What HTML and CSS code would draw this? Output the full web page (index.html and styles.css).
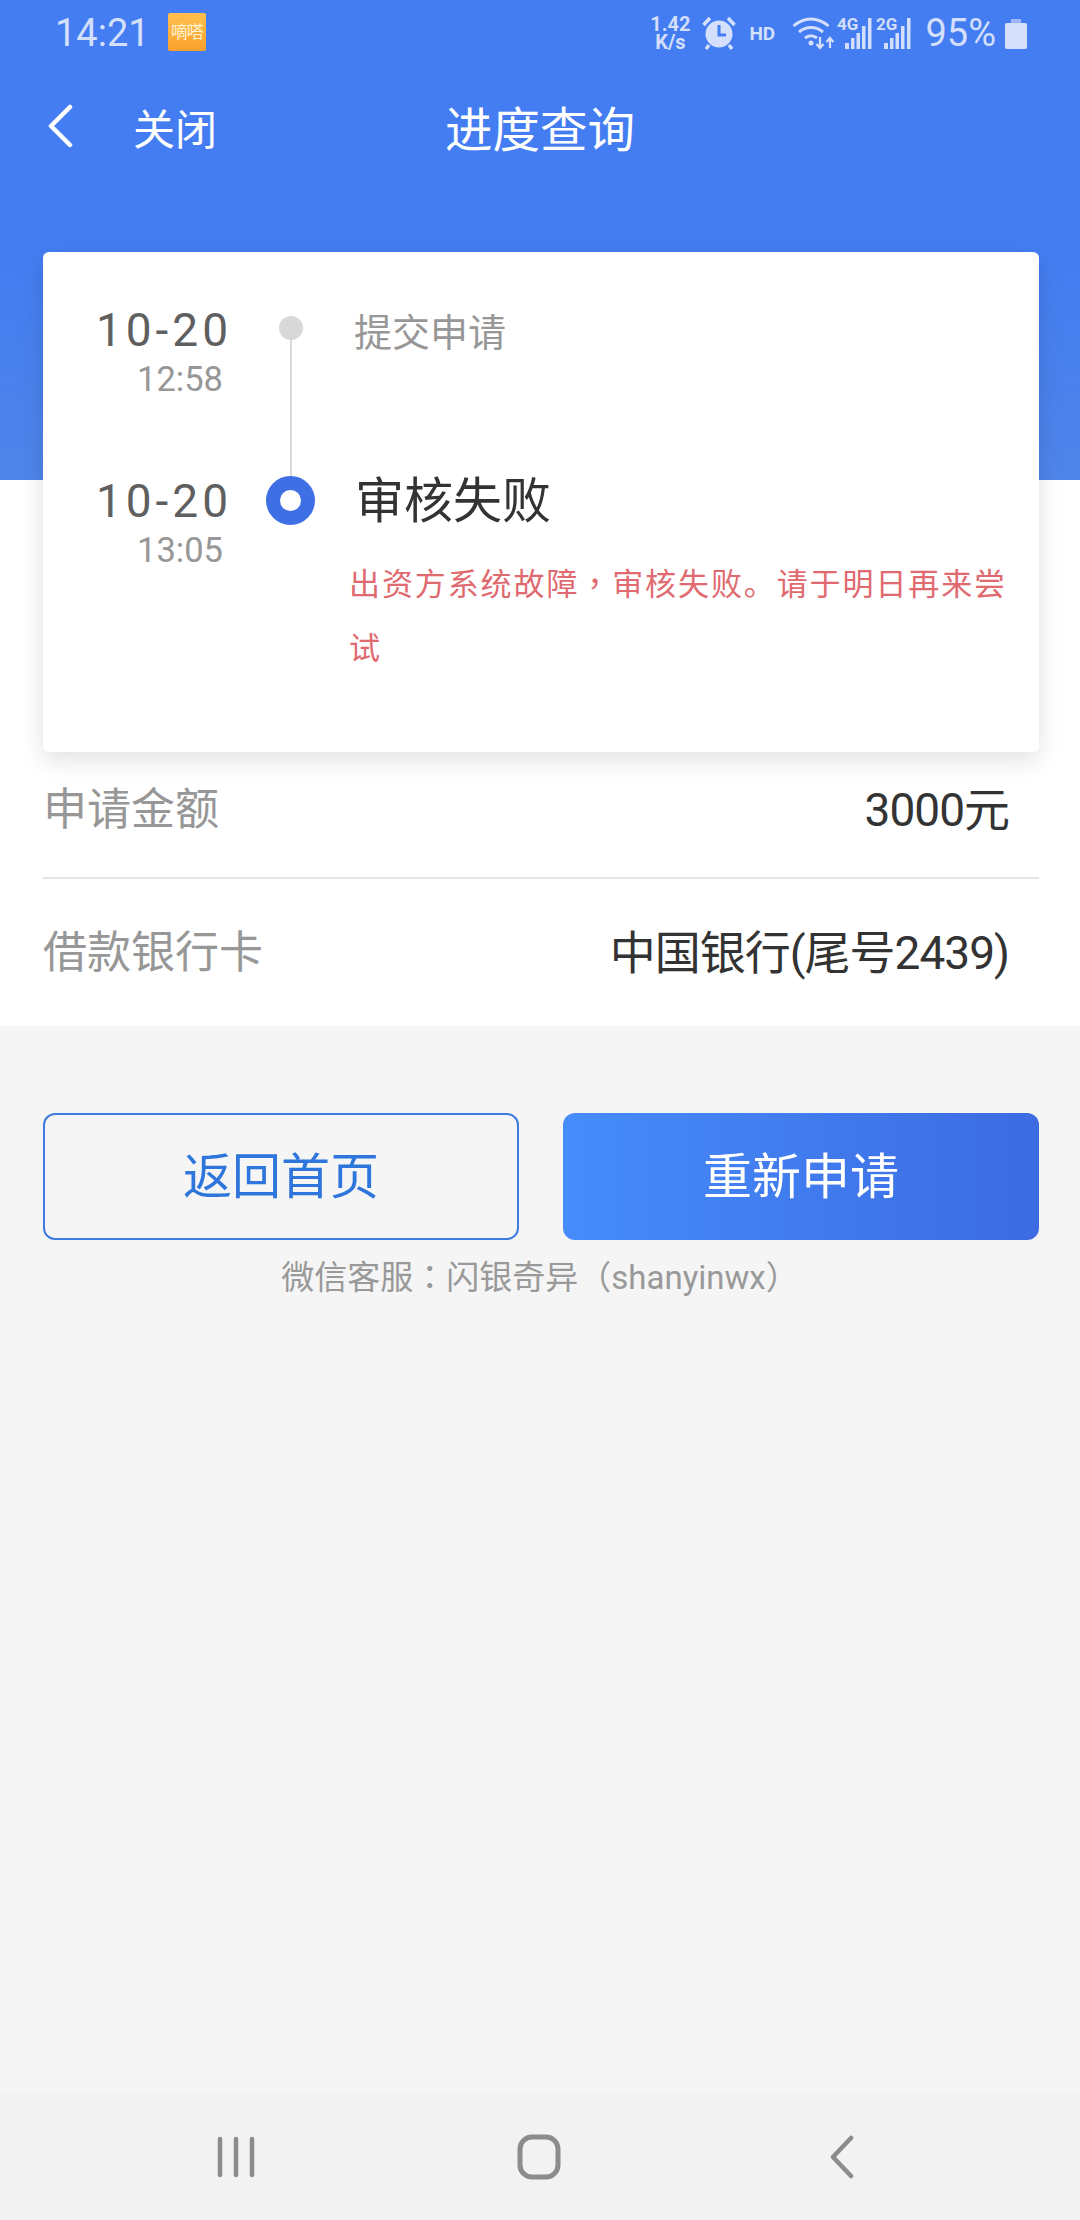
FILE: index.html
```html
<!DOCTYPE html>
<html lang="zh-CN">
<head>
  <title>进度查询</title>
  <meta charset="utf-8">
  <link rel="stylesheet" href="styles.css">
</head>
<body>
  <div class="top">
    <div class="status">
      <span class="clock">14:21</span>
      <span class="app-badge">嘀嗒</span>
      <span class="status-right">
        <span class="speed">1.42<br>K/s</span>
        <svg class="alarm" width="34" height="34" viewBox="0 0 34 34">
          <circle cx="17" cy="18" r="13.500" fill="#d3dffb"/>
          <path d="M17 9v10h7" fill="none" stroke="#437df1" stroke-width="3"/>
          <path d="M1.500 9 8 2M32.500 9 26 2M7 29l-3 4M27 29l3 4" fill="none" stroke="#d3dffb" stroke-width="3.500"/>
        </svg>
        <span class="hd">HD</span>
        <svg class="wifi" width="42" height="36" viewBox="0 0 42 36" fill="none" stroke="#d3dffb">
          <path d="M1.500 11C12 1.500 26 1.500 36.500 11" stroke-width="3"/>
          <path d="M7 17c7-6 17-6 24 0" stroke-width="3"/>
          <path d="M13 23c4-3 8-3 12 0" stroke-width="3"/>
          <circle cx="19" cy="28" r="2.500" fill="#d3dffb" stroke="none"/>
          <path d="M28 22v11M24.500 29l3.500 4 3.500-4M38 33V24M34.500 27l3.500-4 3.500 4" stroke-width="2.200"/>
        </svg>
        <svg class="signal" width="36" height="36" viewBox="0 0 36 36" fill="#d3dffb">
          <text x="0" y="15" class="net">4G</text>
          <rect x="8" y="28" width="4" height="6"/><rect x="14" y="23" width="3.500" height="11"/><rect x="19.500" y="18" width="3.500" height="16"/><rect x="25" y="11" width="3.500" height="23"/><rect x="31" y="3" width="3.500" height="31"/>
        </svg>
        <svg class="signal" width="36" height="36" viewBox="0 0 36 36" fill="#d3dffb">
          <text x="0" y="15" class="net">2G</text>
          <rect x="8" y="28" width="4" height="6"/><rect x="14" y="23" width="3.500" height="11"/><rect x="19.500" y="18" width="3.500" height="16"/><rect x="25" y="11" width="3.500" height="23"/><rect x="31" y="3" width="3.500" height="31"/>
        </svg>
        <span class="battery-text">95%</span>
        <span class="battery"></span>
      </span>
    </div>
    <div class="title-bar">
      <svg class="back" width="26" height="44" viewBox="0 0 26 44">
        <path d="M23 3 4 22l19 19" fill="none" stroke="#fff" stroke-width="4.500" stroke-linecap="round" stroke-linejoin="round"/>
      </svg>
      <span class="close">关闭</span>
      <span class="title">进度查询</span>
    </div>
  </div>

  <div class="sheet">
    <div class="card">
      <div class="step step-first">
        <div class="when">
          <div class="date">10-20</div>
          <div class="time">12:58</div>
        </div>
        <div class="rail">
          <span class="dot"></span>
          <span class="line"></span>
        </div>
        <div class="what">提交申请</div>
      </div>
      <div class="step step-now">
        <div class="when">
          <div class="date">10-20</div>
          <div class="time">13:05</div>
        </div>
        <div class="rail">
          <span class="dot-now"></span>
        </div>
        <div class="what-now">
          <div class="now-title">审核失败</div>
          <div class="reason">出资方系统故障<span class="mid" lang="zh-TW">，</span>审核失败。请于明日再来尝试</div>
        </div>
      </div>
    </div>
    <div class="row row-first">
      <span class="row-label">申请金额</span>
      <span class="row-value">3000元</span>
    </div>
    <div class="row">
      <span class="row-label">借款银行卡</span>
      <span class="row-value">中国银行(尾号2439)</span>
    </div>
  </div>

  <div class="actions">
    <button type="button" class="btn btn-line">返回首页</button>
    <button type="button" class="btn btn-fill">重新申请</button>
  </div>
  <div class="service">微信客服<span class="mid" lang="zh-TW">：</span>闪银奇异（shanyinwx）</div>

  <div class="navbar">
    <svg width="40" height="44" viewBox="0 0 40 44" fill="none" stroke="#8c8c8c" stroke-width="4.500" stroke-linecap="round">
      <path d="M4 4v36M20 4v36M36 4v36"/>
    </svg>
    <svg class="nav-home" width="44" height="46" viewBox="0 0 44 46" fill="none" stroke="#8c8c8c" stroke-width="5">
      <rect x="3" y="3" width="38" height="40" rx="12"/>
    </svg>
    <svg width="26" height="44" viewBox="0 0 26 44" fill="none" stroke="#8c8c8c" stroke-width="4.500" stroke-linecap="round" stroke-linejoin="round">
      <path d="M22 3 4 22l18 19"/>
    </svg>
  </div>
</body>
</html>
```

FILE: styles.css
```css
* {
  box-sizing: border-box;
}
html, body {
  margin: 0;
  padding: 0;
}
body {
  width: 1080px;
  height: 2220px;
  display: flex;
  flex-direction: column;
  overflow: hidden;
  background: #f5f5f5;
  font-family: Roboto, "Noto Sans CJK SC", sans-serif;
}

/* blue head */
.top {
  height: 480px;
  flex: none;
  background: linear-gradient(#437df1 0, #437df1 260px, #4f85ea 480px);
}
.status {
  height: 66px;
  display: flex;
  align-items: center;
  padding: 0 53px 0 55px;
  color: #d3dffb;
}
.clock {
  font-size: 38px;
}
.app-badge {
  width: 38px;
  height: 38px;
  margin-left: 18px;
  margin-top: -2px;
  background: linear-gradient(#ffc04d, #fb9f2c);
  border-radius: 2px;
  color: #fff3d0;
  font-size: 17px;
  line-height: 38px;
  text-align: center;
  white-space: nowrap;
  letter-spacing: -1px;
}
.status-right {
  margin-left: auto;
  display: flex;
  align-items: center;
}
.speed {
  width: 42px;
  font-size: 20px;
  font-weight: 700;
  line-height: 18px;
  text-align: center;
}
.alarm {
  margin-left: 11px;
}
.hd {
  margin-left: 13px;
  width: 28px;
  font-size: 19px;
  font-weight: 700;
}
.wifi {
  margin-left: 15px;
}
.signal {
  margin-left: 3px;
}
.net {
  font-family: Roboto, sans-serif;
  font-size: 17px;
  font-weight: 700;
}
.battery-text {
  margin-left: 13px;
  font-size: 38px;
}
.battery {
  position: relative;
  width: 22px;
  height: 26px;
  margin-left: 9px;
  margin-top: 5px;
  background: #d3dffb;
  border-radius: 2px;
}
.battery::before {
  content: "";
  position: absolute;
  left: 6px;
  top: -4px;
  width: 10px;
  height: 4px;
  background: #9db9f5;
}
.title-bar {
  display: flex;
  align-items: center;
  height: 64px;
  margin-top: 28px;
  padding-left: 47px;
  color: #fff;
}
.close {
  margin-left: 60px;
  font-size: 42px;
}
.title {
  margin-left: 228px;
  font-size: 47.500px;
}

/* white part with the card */
.sheet {
  flex: none;
  height: 546px;
  background: #fff;
}
.card {
  height: 500px;
  margin: -228px 41px 0 43px;
  padding: 64px 0 0 47px;
  position: relative;
  background: #fff;
  border-radius: 6px;
  box-shadow: 0 8px 24px rgba(0, 0, 0, 0.12);
}
.step {
  display: flex;
}
.step-first {
  height: 160px;
}
.when {
  width: 142px;
  flex: none;
  text-align: right;
  white-space: nowrap;
}
.step-now .when {
  padding-top: 11px;
}
.date {
  height: 28px;
  color: #5f5f5f;
  font-size: 46px;
  line-height: 28px;
  letter-spacing: 4px;
}
.time {
  margin-top: 15px;
  margin-right: 9px;
  color: #979797;
  font-size: 34.500px;
  line-height: 40px;
}
.rail {
  width: 50px;
  flex: none;
  margin-left: 33px;
  display: flex;
  flex-direction: column;
  align-items: center;
}
.dot {
  width: 24px;
  height: 24px;
  flex: none;
  margin-left: 2px;
  border-radius: 50%;
  background: #d8d8d8;
}
.line {
  width: 2px;
  flex: 1;
  margin-left: 2px;
  background: #d8d8d8;
}
.dot-now {
  width: 49px;
  height: 49px;
  border: 14px solid #3e6fe4;
  border-radius: 50%;
  background: #fff;
}
.what {
  margin-left: 39px;
  color: #979797;
  font-size: 38px;
  line-height: 34px;
}
.what-now {
  margin-left: 34px;
  width: 670px;
}
.now-title {
  margin-left: 6px;
  color: #333;
  font-size: 49px;
  line-height: 52px;
}
.reason {
  margin-top: 25px;
  color: #e06a70;
  font-size: 31px;
  letter-spacing: 1.900px;
  line-height: 64px;
  width: 668px;
}
.mid {
  font-family: "Noto Sans CJK TC", sans-serif;
  line-height: 1;
}
.row {
  height: 146px;
  margin: 0 41px 0 43px;
  padding-right: 30px;
  padding-bottom: 6px;
  display: flex;
  align-items: center;
  justify-content: space-between;
}
.row-first {
  height: 127px;
  padding-bottom: 18px;
  border-bottom: 2px solid #e4e4e4;
}
.row-label {
  color: #979797;
  font-size: 44px;
}
.row-value {
  color: #333;
  font-size: 46px;
  letter-spacing: -1px;
}

/* buttons */
.actions {
  display: flex;
  justify-content: space-between;
  margin: 87px 41px 0 43px;
}
.btn {
  width: 476px;
  height: 127px;
  padding: 0 0 8px;
  border-radius: 12px;
  font-family: inherit;
  font-size: 49px;
}
.btn-line {
  border: 2px solid #3e7ce0;
  background: transparent;
  color: #2f76dc;
}
.btn-fill {
  border: none;
  background: linear-gradient(90deg, #468cfb, #3c6be2);
  color: #fff;
}
.service {
  margin-top: 16px;
  text-align: center;
  color: #999;
  font-size: 33px;
  line-height: 44px;
}

/* system nav */
.navbar {
  flex: none;
  height: 126px;
  margin-top: auto;
  display: flex;
  align-items: center;
  padding: 0 225px 0 216px;
  justify-content: space-between;
  background: #f2f2f2;
}
.nav-home {
  margin-right: 8px;
}
```
